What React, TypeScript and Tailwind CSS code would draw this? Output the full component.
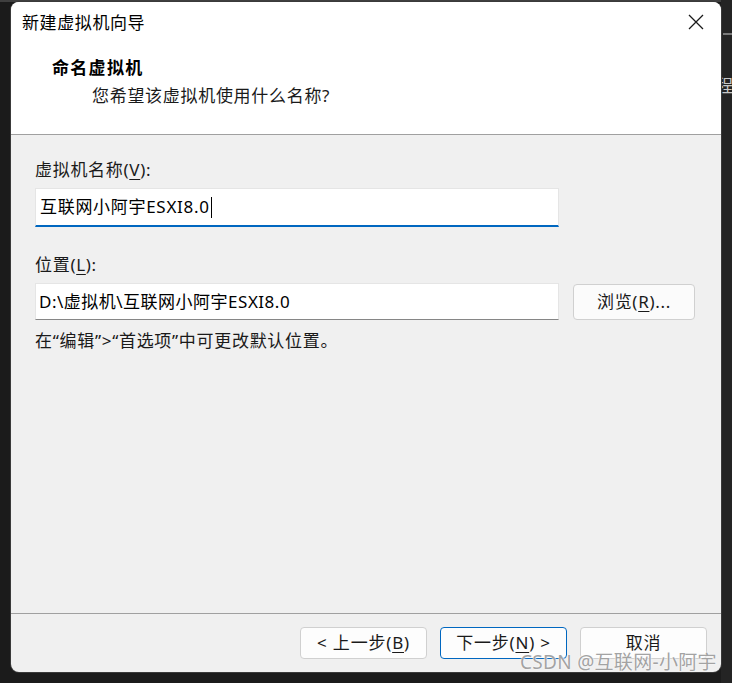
import React from 'react'

const font = { fontFamily: '"Noto Sans", "Noto Sans CJK SC", sans-serif' }

function Mn({ children }: { children: React.ReactNode }) {
  return <span className="underline underline-offset-[3px] decoration-1">{children}</span>
}

function DlgButton({ children, primary = false }: { children: React.ReactNode; primary?: boolean }) {
  return (
    <button
      className={
        'w-[127px] h-[32px] rounded-[4px] bg-[#fdfdfd] text-[17px] tracking-[0.8px] text-[#1a1a1a] flex items-center justify-center ' +
        (primary ? 'border border-[#0067c0]' : 'border border-[#d0d0d0]')
      }
    >
      {children}
    </button>
  )
}

export default function App() {
  return (
    <div className="relative w-[732px] h-[683px] bg-[#1b1b1b] overflow-hidden" style={font}>
      {/* desktop bits behind the dialog */}
      <div className="absolute left-0 top-0 w-full h-[2px] bg-[#3f3f3f]" />
      <div className="absolute left-[721px] top-0 w-[11px] h-[683px] bg-[#242424]" />
      <div className="absolute left-[723px] top-[33px] w-[9px] h-[2px] bg-[#7a7a7a]" />
      <div className="absolute left-[716px] top-[74px] text-[17px] leading-[24px] text-[#c8c8c8]">程</div>

      {/* dialog window */}
      <div className="relative ml-[11px] mt-[2px] w-[710px] h-[670px] rounded-[8px] overflow-hidden flex flex-col bg-[#f0f0f0] shadow-[0_0_0_1px_#3a3a3a]">
        {/* header */}
        <div className="h-[132px] bg-white flex flex-col shrink-0">
          <div className="h-[40px] flex items-center justify-between pl-[11px] pr-[17px]">
            <span className="text-[17px] tracking-[0.6px] text-black leading-[24px] mt-[1px]">新建虚拟机向导</span>
            <svg width="16" height="16" viewBox="0 0 16 16" className="text-[#1a1a1a]">
              <path d="M1 1 L15 15 M15 1 L1 15" stroke="currentColor" strokeWidth="1.3" fill="none" />
            </svg>
          </div>
          <div className="pl-[41px] mt-[14px] text-[17px] font-bold tracking-[1.3px] leading-[24px] text-black">命名虚拟机</div>
          <div className="pl-[81px] mt-[4px] text-[17px] tracking-[0.7px] leading-[24px] text-[#1a1a1a]">
            您希望该虚拟机使用什么名称?
          </div>
        </div>
        <div className="h-[1px] bg-[#a0a0a0] shrink-0" />

        {/* body */}
        <div className="flex-1 flex flex-col pl-[24px] pt-[23px] text-[17px] tracking-[0.7px] text-[#1a1a1a]">
          <div className="leading-[24px]">
            虚拟机名称(<Mn>V</Mn>):
          </div>
          <div className="mt-[6px] w-[524px] h-[39px] bg-white border border-[#e5e5e5] border-b-2 border-b-[#0067c0] flex items-center pl-[4px]">
            <span className="leading-[24px] text-black">互联网小阿宇ESXI8.0</span>
            <span className="w-[1px] h-[21px] bg-black ml-[1px]" />
          </div>

          <div className="mt-[26px] leading-[24px]">
            位置(<Mn>L</Mn>):
          </div>
          <div className="mt-[6px] flex items-center gap-[14px]">
            <div className="w-[524px] h-[37px] bg-white border border-[#e5e5e5] border-b-[#868686] flex items-center pl-[3px]">
              <span className="leading-[24px] text-black tracking-[0.5px]">D:\虚拟机\互联网小阿宇ESXI8.0</span>
            </div>
            <button className="w-[122px] h-[36px] rounded-[4px] bg-[#fbfbfb] border border-[#d0d0d0] flex items-center justify-center text-[17px] text-[#1a1a1a]">
              浏览(<Mn>R</Mn>)...
            </button>
          </div>

          <div className="mt-[9px] leading-[24px]">在“编辑”&gt;“首选项”中可更改默认位置。</div>
        </div>

        {/* footer */}
        <div className="h-[1px] bg-[#a0a0a0] shrink-0" />
        <div className="h-[58px] shrink-0 flex items-start justify-end gap-[13px] pt-[13px] pr-[14px]">
          <DlgButton>
            &lt; 上一步(<Mn>B</Mn>)
          </DlgButton>
          <DlgButton primary>
            下一步(<Mn>N</Mn>) &gt;
          </DlgButton>
          <DlgButton>取消</DlgButton>
        </div>
      </div>

      {/* watermark */}
      <div
        className="absolute left-[520px] top-[649px] text-[19px] leading-[26px] text-[#a3a3a3] tracking-[0.3px]"
        style={{ textShadow: '0 0 1px #ffffff, 0 0 2px #ffffff' }}
      >
        CSDN @互联网-小阿宇
      </div>
    </div>
  )
}
